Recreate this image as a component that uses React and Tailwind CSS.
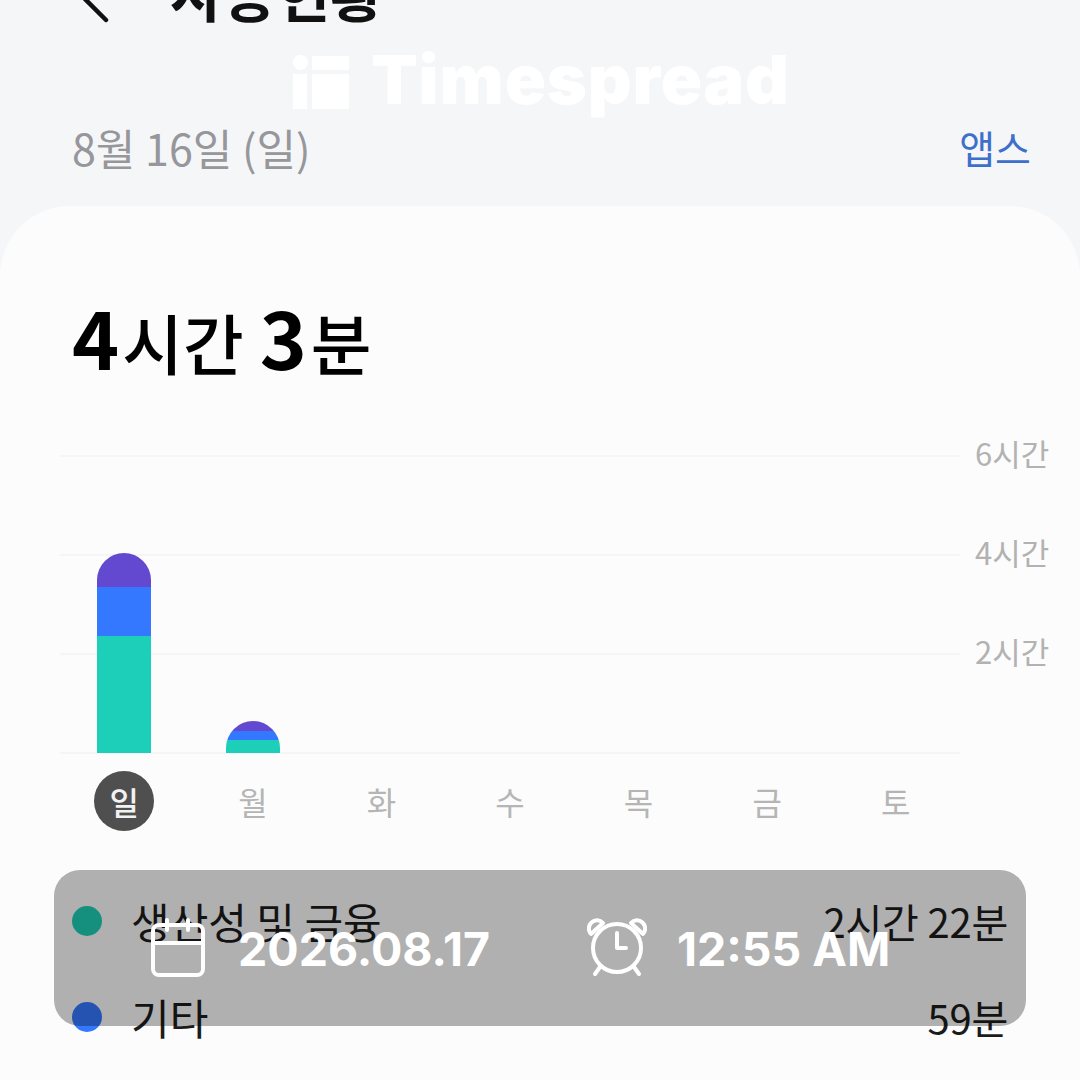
const days = ["일", "월", "화", "수", "목", "금", "토"];
const gridLabels = ["6시간", "4시간", "2시간", ""];

function CalendarIcon() {
  return (
    <svg width="56" height="60" viewBox="0 0 56 60" fill="none" stroke="#fff" strokeWidth="4" strokeLinecap="round" strokeLinejoin="round">
      <rect x="3" y="7" width="50" height="50" rx="6" />
      <path d="M3 25h50M17 2v10M38 2v10" />
    </svg>
  );
}

function AlarmIcon() {
  return (
    <svg width="60" height="60" viewBox="0 0 60 60" fill="none" stroke="#fff" strokeWidth="4" strokeLinecap="round" strokeLinejoin="round">
      <circle cx="30" cy="30" r="24" />
      <path d="M30 15v15h9" />
      <path d="M4 16a8 8 0 0 1 12-11z" />
      <path d="M56 16a8 8 0 0 0-12-11z" />
      <path d="M13 49l-5 7M47 49l5 7" />
    </svg>
  );
}

function Row({ color, label, value, className }) {
  return (
    <div className={`flex items-center ${className}`}>
      <span className={`w-[30px] h-[30px] rounded-full ${color}`} />
      <span className="ml-[29px] text-[42px] leading-[50px] text-[#1c1c1c]">{label}</span>
      <span className="ml-auto text-[40px] leading-[50px] text-[#1c1c1c] tracking-[-0.2px]">{value}</span>
    </div>
  );
}

export default function App() {
  return (
    <div className="relative w-[1080px] h-[1080px] overflow-hidden bg-[#f5f6f8] font-['Noto_Sans_CJK_KR','Liberation_Sans',sans-serif]">
      <div className="flex items-center h-[60px] -mt-[30px] pl-[81px]">
        <svg width="28" height="46" viewBox="0 0 28 46" fill="none" stroke="#111" strokeWidth="4.5" strokeLinecap="round" strokeLinejoin="round">
          <path d="M25 43L3 21L25 -1" />
        </svg>
        <span className="ml-[61px] mb-[16px] text-[58px] leading-[60px] font-bold text-[#111]">사용현황</span>
      </div>

      <div className="flex items-center justify-between mt-[87px] pl-[72px] pr-[49px] h-[60px]">
        <span className="text-[43px] leading-[60px] text-[#97979b]">8월 16일 (일)</span>
        <span className="text-[39px] leading-[60px] text-[#3e6fcb]">앱스</span>
      </div>

      <div className="mt-[29px] bg-[#fcfcfc] rounded-t-[70px] h-[900px]">
        <div className="pt-[84px] pl-[72px] flex items-baseline h-[190px] text-black">
          <span className="text-[80px] leading-[90px] font-bold">4</span>
          <span className="ml-[3px] text-[66px] leading-[90px] font-medium">시간</span>
          <span className="ml-[16px] text-[80px] leading-[90px] font-bold">3</span>
          <span className="ml-[4px] text-[66px] leading-[90px] font-medium">분</span>
        </div>

        <div className="mt-[10px] ml-[60px] w-[990px] h-[356px]">
          {gridLabels.map((label) => (
            <div key={label} className="flex items-center h-[99px]">
              <div className="w-[900px] border-t-[2px] border-[#f5f5f5]" />
              <span className="ml-[15px] mb-[6px] text-[31px] leading-[3px] text-[#b2b2b2]">{label}</span>
            </div>
          ))}
        </div>

        <div className="ml-[60px] w-[900px] grid grid-cols-7 h-[78px] items-center justify-items-center">
          {days.map((day, i) => (
            <span
              key={day}
              className={i === 0
                ? "w-[60px] h-[60px] rounded-full bg-[#4f4f4f] text-[#f2f2f2] font-medium flex items-center justify-center text-[32px] leading-none"
                : "text-[#b5b5b5] text-[32px] leading-none"}
            >
              {day}
            </span>
          ))}
        </div>

        <div className="ml-[72px] mr-[72px] mt-[56px]">
          <Row color="bg-[#1fcfb6]" label="생산성 및 금융" value="2시간 22분" className="h-[50px]" />
          <Row color="bg-[#3478ff]" label="기타" value="59분" className="h-[50px] mt-[46px]" />
        </div>
      </div>

      {/* bars sit on top of the grid lines */}
      <div className="absolute left-[60px] top-[452px] w-[900px] h-[301px] grid grid-cols-7 items-end justify-items-center">
        <div className="w-[54px] h-[200px] rounded-t-[27px] overflow-hidden flex flex-col">
          <div className="h-[34px] bg-[#6349d0]" />
          <div className="h-[49px] bg-[#3478ff]" />
          <div className="flex-1 bg-[#1dcfb8]" />
        </div>
        <div className="w-[54px] h-[32px] rounded-t-[27px] overflow-hidden flex flex-col">
          <div className="h-[10px] bg-[#6349d0]" />
          <div className="h-[9px] bg-[#3478ff]" />
          <div className="flex-1 bg-[#1dcfb8]" />
        </div>
      </div>

      {/* watermark */}
      <div className="absolute left-[293px] top-[44px] flex items-center h-[76px] text-white">
        <svg width="56" height="54" viewBox="0 0 56 54" fill="#fff">
          <circle cx="7.5" cy="7.5" r="7.5" />
          <rect x="0" y="19" width="14" height="35" />
          <rect x="19" y="1" width="37" height="14" />
          <rect x="19" y="19" width="37" height="35" />
        </svg>
        <span className="ml-[22px] mb-[6px] font-['Inter',sans-serif] font-black text-[68px] leading-[76px] tracking-[0.9px]">Timespread</span>
      </div>

      {/* date and time bar */}
      <div className="absolute left-[54px] top-[870px] w-[972px] h-[156px] rounded-[26px] bg-black/30 flex items-center pl-[96px] font-['Inter',sans-serif] font-bold text-white text-[46.5px] leading-none">
        <CalendarIcon />
        <span className="ml-[32px] pt-[2px]">2026.08.17</span>
        <span className="ml-[97px]"><AlarmIcon /></span>
        <span className="ml-[30px] pt-[2px]">12:55 AM</span>
      </div>
    </div>
  );
}
